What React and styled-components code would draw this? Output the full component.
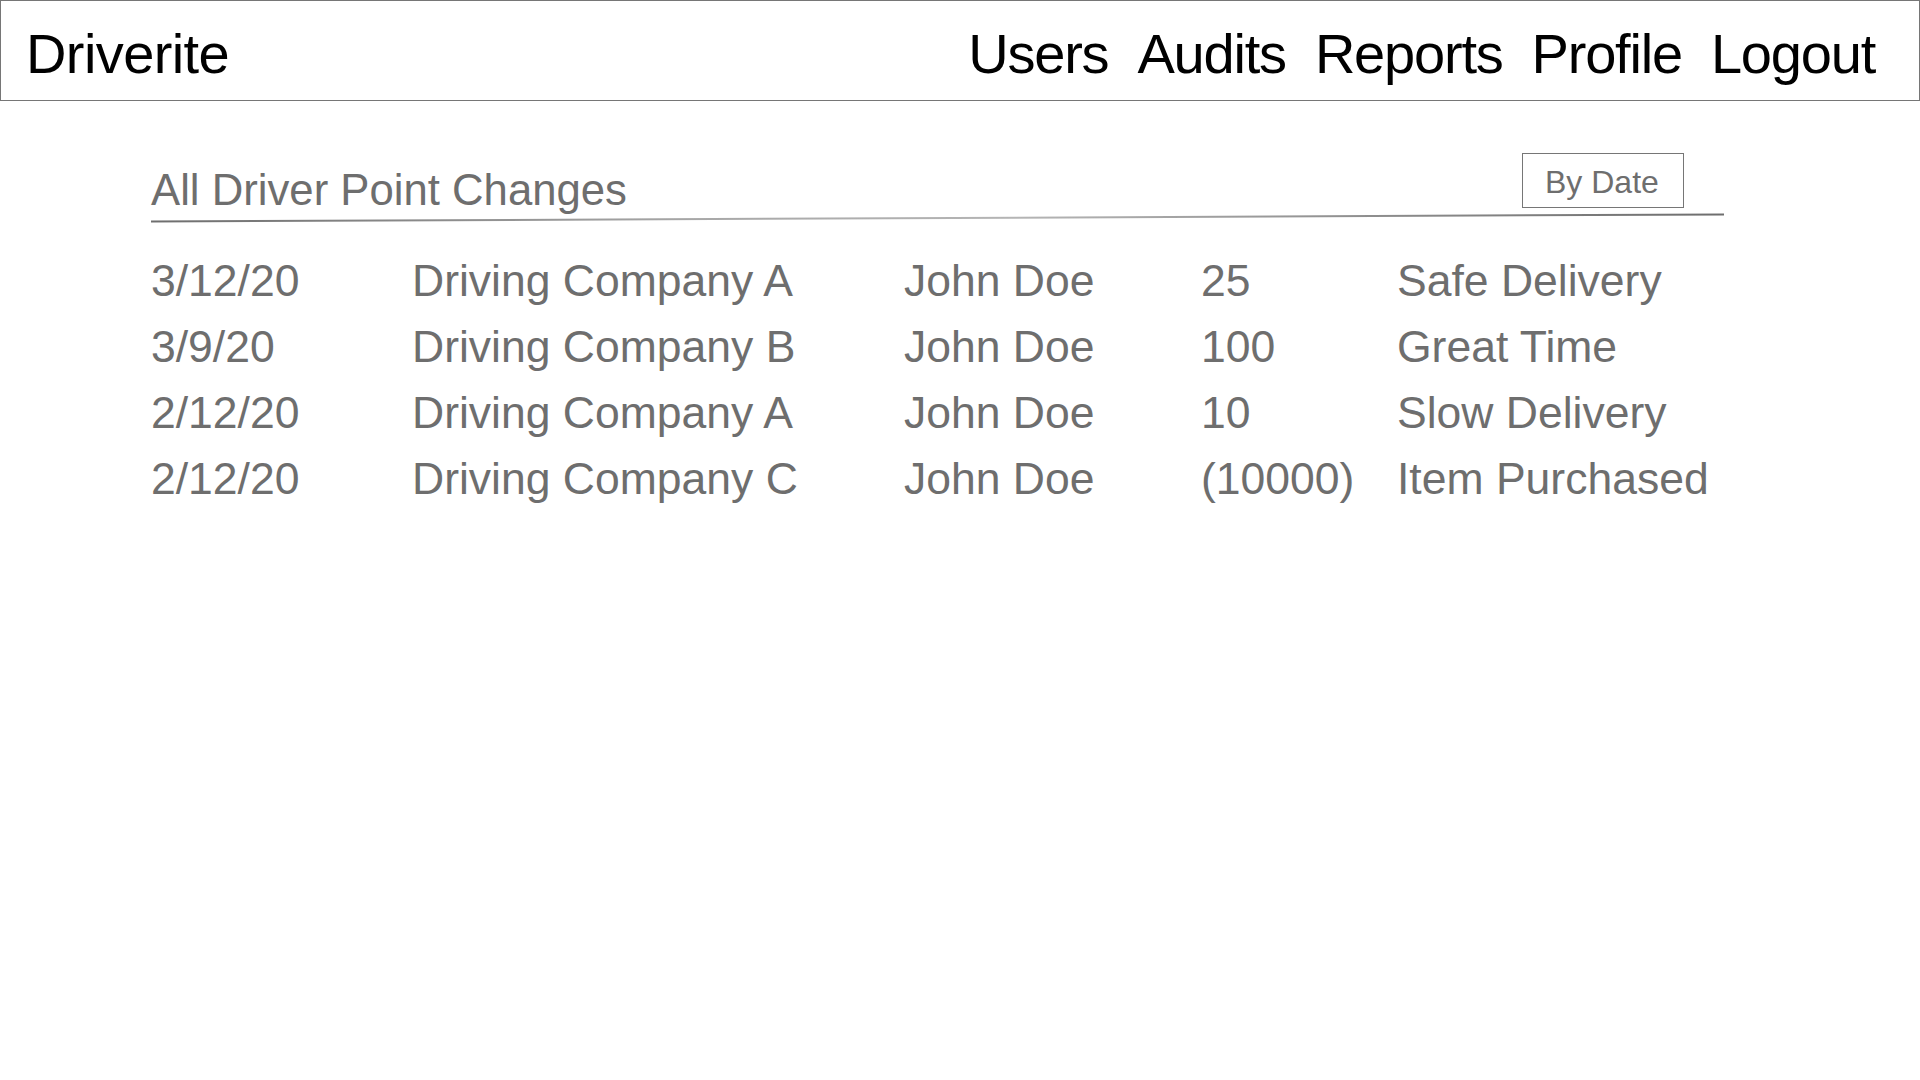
import React from "react";
import styled, { createGlobalStyle } from "styled-components";

const GlobalStyle = createGlobalStyle`
  html, body {
    margin: 0;
    padding: 0;
    background: #ffffff;
  }
  body {
    font-family: "Liberation Sans", Arial, sans-serif;
  }
`;

const changes = [
  { date: "3/12/20", company: "Driving Company A", name: "John Doe", points: "25", reason: "Safe Delivery" },
  { date: "3/9/20", company: "Driving Company B", name: "John Doe", points: "100", reason: "Great Time" },
  { date: "2/12/20", company: "Driving Company A", name: "John Doe", points: "10", reason: "Slow Delivery" },
  { date: "2/12/20", company: "Driving Company C", name: "John Doe", points: "(10000)", reason: "Item Purchased" },
];

const navLinks = ["Users", "Audits", "Reports", "Profile", "Logout"];

export default function App() {
  return (
    <>
      <GlobalStyle />
      <Header>
        <Brand>Driverite</Brand>
        <Nav>
          {navLinks.map((link) => (
            <NavLink key={link}>{link}</NavLink>
          ))}
        </Nav>
      </Header>

      <Main>
        <TitleRow>
          <Title>All Driver Point Changes</Title>
          <SortButton>By Date</SortButton>
        </TitleRow>
        <Divider />

        <Table>
          {changes.map((c, i) => (
            <Row key={i}>
              <Cell>{c.date}</Cell>
              <Cell>{c.company}</Cell>
              <Cell>{c.name}</Cell>
              <Cell>{c.points}</Cell>
              <Cell>{c.reason}</Cell>
            </Row>
          ))}
        </Table>
      </Main>
    </>
  );
}

const Header = styled.header`
  box-sizing: border-box;
  height: 101px;
  width: 1920px;
  border: 1px solid #767676;
  display: flex;
  align-items: center;
  justify-content: space-between;
  padding: 6px 44px 0 25px;
  color: #000;
  font-size: 56px;
  line-height: 56px;
  letter-spacing: -1.2px;
`;

const Brand = styled.div`
  letter-spacing: -0.6px;
`;

const Nav = styled.nav`
  display: flex;
  gap: 29px;
`;

const NavLink = styled.span`
  cursor: pointer;
`;

const Main = styled.main`
  padding: 52px 196px 0 151px;
  color: #6e6e6e;
`;

const TitleRow = styled.div`
  display: flex;
  justify-content: space-between;
  align-items: flex-start;
`;

const Title = styled.h1`
  margin: 12px 0 0;
  font-size: 43.7px;
  font-weight: 400;
  line-height: 1.15;
`;

const SortButton = styled.button`
  box-sizing: border-box;
  width: 162px;
  height: 55px;
  margin-right: 40px;
  padding: 3px 0 0 22px;
  border: 1px solid #767676;
  background: #fff;
  color: #6e6e6e;
  font-family: inherit;
  font-size: 32px;
  line-height: 49px;
  text-align: left;
`;

const Divider = styled.div`
  margin-top: 2px;
  height: 1.5px;
  background: linear-gradient(to right, #6e6e6e, #a8a8a8 35%, #b5b5b5 55%, #8a8a8a 80%, #6e6e6e);
  transform: rotate(-0.26deg);
`;

const Table = styled.div`
  margin-top: 29px;
  display: flex;
  flex-direction: column;
`;

const Row = styled.div`
  display: grid;
  grid-template-columns: 261px 492px 297px 196px auto;
  font-size: 44.5px;
  line-height: 66px;
`;

const Cell = styled.div`
  white-space: nowrap;
`;
